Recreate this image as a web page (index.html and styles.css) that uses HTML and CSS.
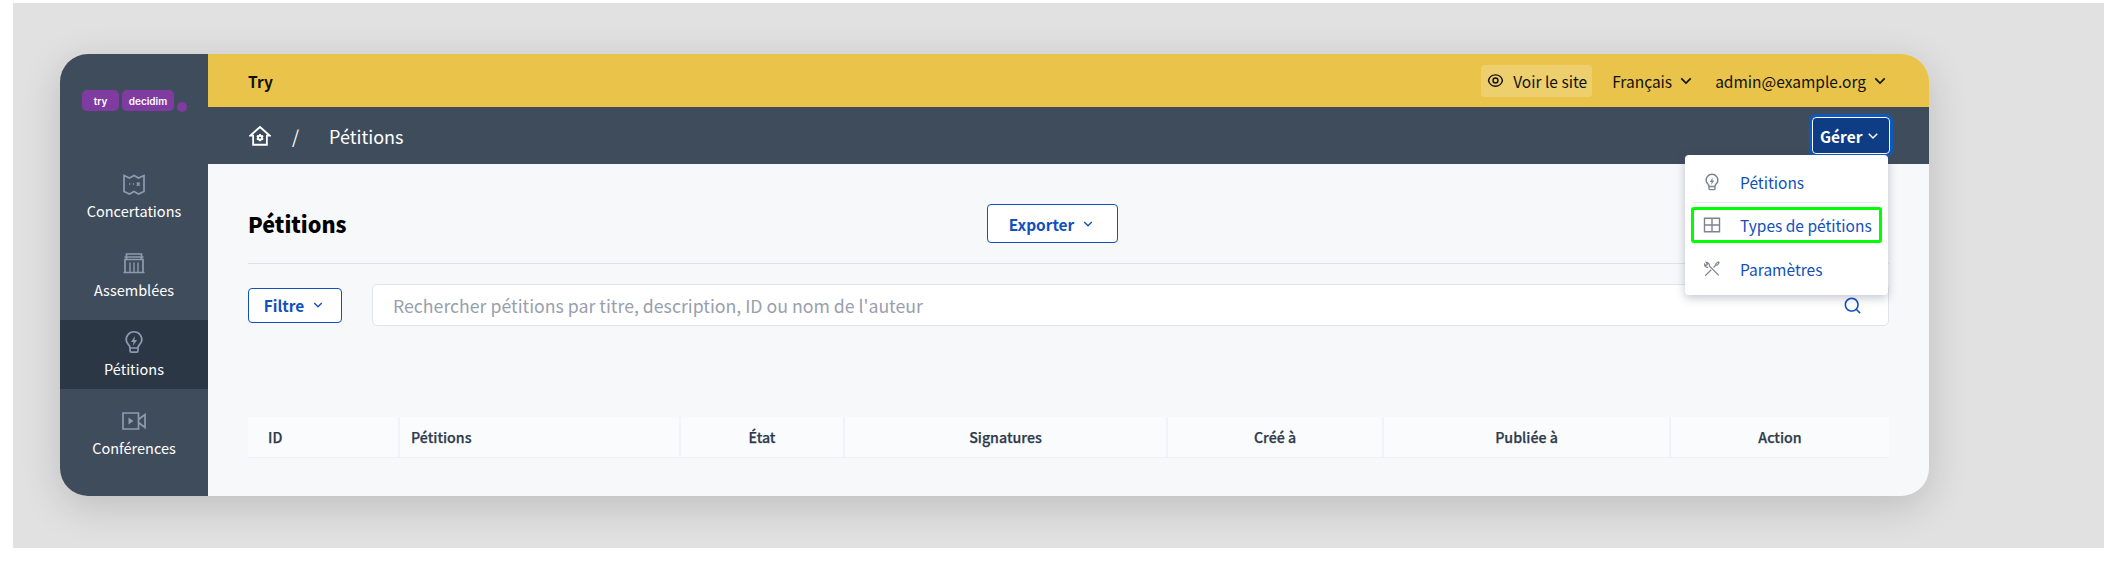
FILE: index.html
```html
<!DOCTYPE html>
<html lang="fr">
<head>
<meta charset="utf-8">
<title>Pétitions</title>
<link rel="stylesheet" href="styles.css">
</head>
<body>
<div class="backdrop">
  <div class="app">
    <aside class="sidebar">
      <div class="logo">
        <span class="pill pill-try">try</span>
        <span class="pill pill-decidim">decidim</span>
        <span class="logo-dot"></span>
      </div>
      <nav class="nav">
        <a class="nav-item">
          <svg class="nav-icon" viewBox="0 0 24 24"><path d="M2 3.500l5.500 2.500 4.500-2.500 4.500 2.500 5.500-2.500v16l-5.500 2.500-4.500-2.500-4.500 2.500-5.500-2.500z"/><path class="fine" d="M7 12h1.200M10.800 12h1.200M14.800 10.500l2.800 3.200M17.600 10.500l-2.800 3.200"/></svg>
          <span>Concertations</span>
        </a>
        <a class="nav-item">
          <svg class="nav-icon" viewBox="0 0 24 24"><path d="M1.500 21.500h21M3 21.500V8.500h18v13M4.500 8.500V3h15v5.500M2.500 6h19"/><path class="fine" d="M8 11.500v10M12 11.500v10M16 11.500v10"/></svg>
          <span>Assemblées</span>
        </a>
        <a class="nav-item is-active">
          <svg class="nav-icon" viewBox="0 0 24 24"><path d="M8 17.500c0-2.200-3-3.700-3.600-6.200a7.800 7.800 0 1 1 15.200 0c-.6 2.500-3.600 4-3.600 6.200v3.300a1.400 1.400 0 0 1-1.400 1.400H9.400A1.400 1.400 0 0 1 8 20.800zM8.500 18h7"/><path class="solid" d="M13 6l-4 6h2.500l-.7 4 4.200-6h-2.600z"/></svg>
          <span>Pétitions</span>
        </a>
        <a class="nav-item">
          <svg class="nav-icon" viewBox="0 0 24 24"><path d="M1 4h15.500v16H1zM16.500 10.500l6.500-5v13l-6.500-5z"/><path class="solid" d="M6.500 8.500l5 3.500-5 3.500z"/></svg>
          <span>Conférences</span>
        </a>
      </nav>
    </aside>
    <div class="main">
      <header class="topbar">
        <strong class="org">Try</strong>
        <div class="topbar-actions">
          <a class="see-site">
            <svg class="eye" viewBox="0 0 24 24"><path d="M12 3c5.392 0 9.878 3.880 10.819 9-.94 5.120-5.427 9-10.819 9-5.392 0-9.878-3.880-10.819-9C2.121 6.880 6.608 3 12 3zm0 16a9.005 9.005 0 0 0 8.777-7 9.005 9.005 0 0 0-17.554 0A9.005 9.005 0 0 0 12 19zm0-2.500a4.500 4.500 0 1 1 0-9 4.500 4.500 0 0 1 0 9zm0-2a2.500 2.500 0 1 0 0-5 2.500 2.500 0 0 0 0 5z"/></svg>
            Voir le site
          </a>
          <a class="top-link lang">Français <svg class="chev" viewBox="0 0 24 24"><path d="M12 13.172l4.950-4.950 1.414 1.414L12 16 5.636 9.636 7.050 8.222z"/></svg></a>
          <a class="top-link">admin@example.org <svg class="chev" viewBox="0 0 24 24"><path d="M12 13.172l4.950-4.950 1.414 1.414L12 16 5.636 9.636 7.050 8.222z"/></svg></a>
        </div>
      </header>
      <div class="crumbs">
        <svg class="home" viewBox="0 0 24 24"><path d="M12 2.200L1.500 11.500h3v10h15v-10h3z" /><circle cx="12" cy="13.800" r="2.100"/><path class="cog" d="M12 9.800v1.800M12 16v1.800M8.500 11.800l1.600.9M13.900 14.900l1.600.9M8.500 15.800l1.600-.9M13.900 12.700l1.600-.9"/></svg>
        <span class="slash">/</span>
        <span class="crumb">Pétitions</span>
        <div class="manage">
          <button class="manage-btn">Gérer<svg class="chev" viewBox="0 0 24 24"><path d="M12 13.172l4.950-4.950 1.414 1.414L12 16 5.636 9.636 7.050 8.222z"/></svg></button>
          <ul class="menu">
            <li class="menu-item">
              <svg class="menu-icon" viewBox="0 0 24 24"><path d="M8 17.500c0-2.200-3-3.700-3.600-6.200a7.800 7.800 0 1 1 15.200 0c-.6 2.500-3.600 4-3.600 6.200v3.300a1.400 1.400 0 0 1-1.400 1.400H9.400A1.400 1.400 0 0 1 8 20.800zM8.500 18h7"/><path class="solid" d="M13 6l-4 6h2.500l-.7 4 4.200-6h-2.600z"/></svg>
              Pétitions
            </li>
            <li class="menu-item is-current">
              <svg class="menu-icon" viewBox="0 0 24 24"><path d="M2 3h20v18H2zM2 12h20M12 3v18"/></svg>
              Types de pétitions
            </li>
            <li class="menu-item">
              <svg class="menu-icon tools" viewBox="0 0 24 24"><path d="M3 21l8-8M14 10l3-3M16.500 7.500l1-3 3-2 1 1-2 3zM21 20.500L8.500 8M8.500 8c.4-2.500-1.500-5-4.500-5l2 2.500-2 2L2 5.500c0 3 2.500 4.800 5 4.300"/></svg>
              Paramètres
            </li>
          </ul>
        </div>
      </div>
      <main class="content">
        <div class="title-row">
          <h1 class="title">Pétitions</h1>
          <button class="btn btn-export">Exporter <svg class="chev" viewBox="0 0 24 24"><path d="M12 13.172l4.950-4.950 1.414 1.414L12 16 5.636 9.636 7.050 8.222z"/></svg></button>
        </div>
        <div class="filter-row">
          <button class="btn btn-filter">Filtre <svg class="chev" viewBox="0 0 24 24"><path d="M12 13.172l4.950-4.950 1.414 1.414L12 16 5.636 9.636 7.050 8.222z"/></svg></button>
          <div class="search">
            <span class="placeholder">Rechercher pétitions par titre, description, ID ou nom de l'auteur</span>
            <svg class="search-icon" viewBox="0 0 24 24"><path d="M18.031 16.617l4.283 4.282-1.415 1.415-4.282-4.283A8.960 8.960 0 0 1 11 20c-4.968 0-9-4.032-9-9s4.032-9 9-9 9 4.032 9 9a8.960 8.960 0 0 1-1.969 5.617zm-2.006-.742A6.977 6.977 0 0 0 18 11c0-3.868-3.133-7-7-7-3.868 0-7 3.132-7 7 0 3.867 3.132 7 7 7a6.977 6.977 0 0 0 4.875-1.975l.15-.15z"/></svg>
          </div>
        </div>
        <div class="table-head">
          <div class="th left">ID</div>
          <div class="th left">Pétitions</div>
          <div class="th">État</div>
          <div class="th">Signatures</div>
          <div class="th">Créé à</div>
          <div class="th">Publiée à</div>
          <div class="th">Action</div>
        </div>
      </main>
    </div>
  </div>
</div>
</body>
</html>
```
FILE: styles.css
```css
* { box-sizing: border-box; }
html, body { margin: 0; padding: 0; background: #fff; }
body { font-family: "Noto Sans CJK SC", "Noto Sans", sans-serif; overflow: hidden; }
a { color: inherit; text-decoration: none; }

.backdrop {
  margin: 3px 0 0 13px;
  height: 545px;
  padding: 51px 175px 0 47px;
  background: #e1e1e1;
  overflow: hidden;
}
.app {
  display: flex;
  height: 442px;
  border-radius: 28px;
  box-shadow: 0 10px 40px rgba(0, 0, 0, .16);
}

.sidebar {
  flex: 0 0 148px;
  background: #3f4c5c;
  border-radius: 28px 0 0 28px;
}
.logo {
  display: flex;
  align-items: flex-start;
  height: 108px;
  padding: 36px 0 0 22px;
}
.pill {
  display: flex;
  align-items: center;
  justify-content: center;
  height: 21px;
  border-radius: 5px;
  background: #7f3b9f;
  color: #fff;
  font-family: "Inter", sans-serif;
  font-size: 10px;
  font-weight: 600;
}
.pill-try { width: 37px; margin-right: 3px; }
.pill-decidim { width: 52px; }
.logo-dot {
  width: 10px;
  height: 10px;
  margin: 12px 0 0 3px;
  border-radius: 50%;
  background: #7f3b9f;
}
.nav { display: flex; flex-direction: column; gap: 10px; }
.nav-item {
  display: flex;
  flex-direction: column;
  align-items: center;
  height: 69px;
  padding-top: 10px;
  color: #fff;
  font-size: 14.5px;
  line-height: 22px;
}
.nav-item.is-active { background: #2c3746; }
.nav-icon {
  width: 24px;
  height: 24px;
  margin-bottom: 4px;
  fill: none;
  stroke: #8d9bb0;
  stroke-width: 1.7;
}
.fine { stroke-width: 1.4; }
.nav-icon .solid, .menu-icon .solid { fill: currentColor; stroke: none; }
.nav-icon .solid { fill: #8d9bb0; }

.main { flex: 1; min-width: 0; display: flex; flex-direction: column; }

.topbar {
  display: flex;
  align-items: center;
  justify-content: space-between;
  height: 53px;
  padding: 0 39px 0 40px;
  background: #eac44a;
  border-radius: 0 28px 0 0;
  color: #111;
  font-size: 15.5px;
  line-height: 22px;
}
.org { font-weight: 700; }
.topbar-actions { display: flex; align-items: center; }
.see-site {
  display: flex;
  align-items: center;
  height: 32px;
  width: 111px;
  padding-left: 6px;
  margin-right: 20px;
  border-radius: 4px;
  background: rgba(255, 255, 255, .2);
}
.eye { width: 17px; height: 17px; margin-right: 9px; fill: #111; }
.top-link { display: flex; align-items: center; }
.lang { margin-right: 19px; }
.chev { width: 20px; height: 20px; margin-left: 4px; fill: currentColor; }

.crumbs {
  display: flex;
  align-items: center;
  height: 57px;
  padding: 0 39px 0 41px;
  background: #3f4c5c;
  color: #fff;
  font-size: 18px;
  line-height: 24px;
}
.home { width: 22px; height: 22px; fill: none; stroke: #fff; stroke-width: 2; }
.home .cog { stroke-width: 2; }
.slash { margin-left: 21px; }
.crumb { margin-left: 30px; }
.manage { position: relative; margin-left: auto; }
.manage-btn {
  display: flex;
  align-items: center;
  width: 78px;
  height: 37px;
  padding: 0 0 0 7px;
  border: 1px solid #fff;
  border-radius: 4px;
  outline: 3px solid #0b5ac2;
  background: #0f3d85;
  color: #fff;
  font: 700 15.5px/22px "Noto Sans CJK SC", sans-serif;
}
.manage-btn .chev { width: 18px; height: 18px; margin-left: 2px; }
.menu {
  position: absolute;
  top: 38px;
  right: 2px;
  width: 203px;
  height: 140px;
  margin: 0;
  padding: 6px;
  list-style: none;
  background: #fff;
  border-radius: 4px;
  box-shadow: 0 3px 10px rgba(60, 70, 100, .3);
}
.menu-item {
  display: flex;
  align-items: center;
  height: 44px;
  padding-left: 12px;
  color: #1150bd;
  font-size: 15.5px;
  line-height: 22px;
  border-bottom: 1px solid #e9edf3;
  border-radius: 0 0 4px 4px;
}
.menu-item:first-child { height: 42px; }
.menu-item:last-child { border-bottom: 0; }
.menu-item.is-current {
  height: 36px;
  margin: 4px 0;
  padding-left: 9px;
  border: 3px solid #00ff00;
  border-radius: 3px;
}
.menu-icon {
  width: 18px;
  height: 18px;
  margin-right: 19px;
  fill: none;
  stroke: #7e838d;
  stroke-width: 1.9;
  flex: none;
  color: #7e838d;
}
.menu-icon.tools { stroke-width: 1.5; }

.content {
  flex: 1;
  padding: 0 40px;
  background: #f7f8fa;
  border-radius: 0 0 28px 0;
}
.title-row {
  display: flex;
  align-items: center;
  height: 100px;
  padding-top: 20px;
  border-bottom: 1px solid #dfe1e5;
}
.title {
  width: 739px;
  margin: 0;
  color: #000;
  font-size: 21.5px;
  line-height: 32px;
  font-weight: 900;
}
.btn {
  display: flex;
  align-items: center;
  justify-content: center;
  padding: 0;
  border: 1.5px solid #1150bd;
  border-radius: 4px;
  background: #fff;
  color: #1150bd;
  font: 700 15.4px/22px "Noto Sans CJK SC", sans-serif;
}
.btn .chev { width: 16px; height: 16px; margin-left: 6px; }
.btn-export { width: 131px; height: 39px; }
.filter-row {
  display: flex;
  align-items: center;
  margin-top: 20px;
}
.btn-filter { width: 94px; height: 35px; flex: none; margin-right: 30px; }
.search {
  flex: 1;
  display: flex;
  align-items: center;
  justify-content: space-between;
  height: 42px;
  padding: 0 28px 0 20px;
  background: #fff;
  border: 1.5px solid #e3e4e8;
  border-radius: 5px;
}
.placeholder { color: #98a0ad; font-size: 17.7px; line-height: 24px; }
.search-icon { width: 19px; height: 19px; fill: #1150bd; margin-right: -2px; }
.table-head {
  display: grid;
  grid-template-columns: 152px 281px 164px 323px 216px 287px 218px;
  height: 41px;
  margin-top: 91px;
  background: #fafbfd;
  border-bottom: 1px solid #edf2fa;
}
.th {
  display: flex;
  align-items: center;
  justify-content: center;
  color: #2e3a4b;
  font-size: 14.2px;
  font-weight: 500;
  line-height: 20px;
  -webkit-text-stroke: .25px #2e3a4b;
  border-right: 2px solid #eff3fa;
}
.th:last-child { border-right: 0; }
.th.left { justify-content: flex-start; padding-left: 20px; }
.th.left + .th.left { padding-left: 11px; }
```
